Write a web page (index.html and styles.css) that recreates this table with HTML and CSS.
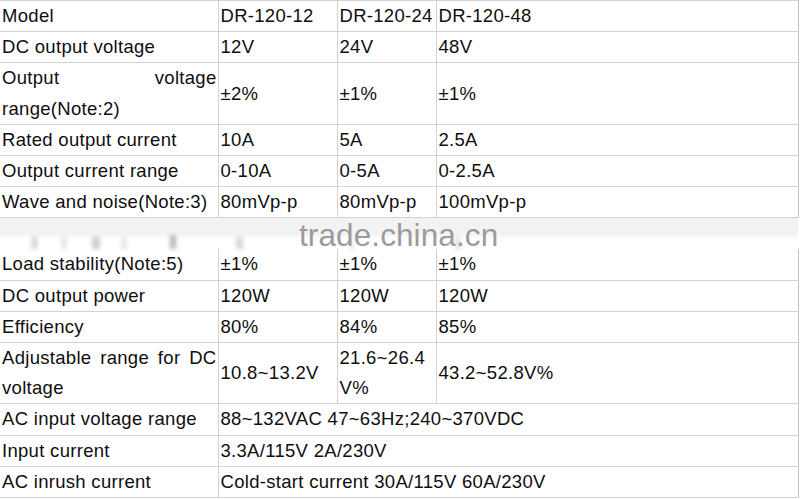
FILE: index.html
```html
<!DOCTYPE html>
<html>
<head>
<meta charset="utf-8">
<link rel="stylesheet" href="styles.css">
</head>
<body>
<table class="spec">
  <colgroup>
    <col class="c1"><col class="c2"><col class="c3"><col class="c4">
  </colgroup>
  <tbody>
    <tr><td class="lbl">Model</td><td>DR-120-12</td><td>DR-120-24</td><td>DR-120-48</td></tr>
    <tr><td class="lbl">DC output voltage</td><td>12V</td><td>24V</td><td>48V</td></tr>
    <tr><td class="lbl">Output voltage range(Note:2)</td><td>±2%</td><td>±1%</td><td>±1%</td></tr>
    <tr><td class="lbl">Rated output current</td><td>10A</td><td>5A</td><td>2.5A</td></tr>
    <tr><td class="lbl">Output current range</td><td>0-10A</td><td>0-5A</td><td>0-2.5A</td></tr>
    <tr><td class="lbl">Wave and noise(Note:3)</td><td>80mVp-p</td><td>80mVp-p</td><td>100mVp-p</td></tr>
    <tr class="blur-row">
      <td colspan="4" class="blur-cell">
        <div class="band">
          <span class="smudge s1"></span>
          <span class="smudge s2"></span>
          <span class="smudge s3"></span>
          <span class="smudge s4"></span>
          <span class="smudge s5"></span>
          <span class="smudge s6"></span>
          <span class="smudge s7"></span>
          <span class="smudge s8"></span>
          <span class="watermark">trade.china.cn</span>
        </div>
      </td>
    </tr>
    <tr class="after-blur"><td class="lbl">Load stability(Note:5)</td><td>±1%</td><td>±1%</td><td>±1%</td></tr>
    <tr><td class="lbl">DC output power</td><td>120W</td><td>120W</td><td>120W</td></tr>
    <tr><td class="lbl">Efficiency</td><td>80%</td><td>84%</td><td>85%</td></tr>
    <tr><td class="lbl">Adjustable range for DC voltage</td><td>10.8~13.2V</td><td>21.6~26.4 V%</td><td>43.2~52.8V%</td></tr>
    <tr><td class="lbl">AC input voltage range</td><td colspan="3">88~132VAC 47~63Hz;240~370VDC</td></tr>
    <tr><td class="lbl">Input current</td><td colspan="3">3.3A/115V 2A/230V</td></tr>
    <tr><td class="lbl">AC inrush current</td><td colspan="3">Cold-start current 30A/115V 60A/230V</td></tr>
  </tbody>
</table>
</body>
</html>
```

FILE: styles.css
```css
html, body {
  margin: 0;
  padding: 0;
  background: #ffffff;
}

.spec {
  border-collapse: collapse;
  table-layout: fixed;
  width: 798px;
  font-family: "Liberation Sans", Arial, sans-serif;
  font-size: 18.5px;
  letter-spacing: 0.3px;
  line-height: 30.2px;
  color: #0e0e0e;
}

.c1 { width: 218px; }
.c2 { width: 119px; }
.c3 { width: 99px; }
.c4 { width: 362px; }

.spec td {
  border: 1px solid #d3d3d3;
  padding: 0 0 0 2px;
  vertical-align: middle;
  white-space: normal;
}

.spec td:first-child {
  border-left: none;
}

.spec td:last-child {
  border-right: 1px solid #c2c2c2;
}

.spec td.lbl {
  text-align: justify;
  padding: 0 1px 0 2px;
}

.blur-cell {
  padding: 0 !important;
  border-left: hidden !important;
  border-right: hidden !important;
  border-bottom: hidden !important;
}

.after-blur td {
  border-top: hidden;
}

.band {
  position: relative;
  height: 31px;
  background: linear-gradient(to bottom, #f2f2f2 0, #f3f3f3 17px, #fbfbfb 19px, #ffffff 22px);
  overflow: visible;
}

.watermark {
  position: absolute;
  left: 299px;
  top: 5px;
  font-family: "Liberation Sans", Arial, sans-serif;
  font-size: 31.5px;
  letter-spacing: 0.1px;
  line-height: 24px;
  color: #9b9b9b;
}

.smudge {
  position: absolute;
  bottom: 0;
  width: 5px;
  height: 12px;
  background: #b9b9b9;
  filter: blur(2px);
  opacity: 0.7;
}

.s1 { left: 32px; }
.s2 { left: 62px; width: 4px; opacity: 0.5; }
.s3 { left: 92px; width: 8px; }
.s4 { left: 122px; width: 4px; opacity: 0.5; }
.s5 { left: 170px; width: 6px; height: 14px; background: #999999; }
.s6 { left: 236px; width: 7px; opacity: 0.6; }
.s7 { left: 350px; width: 4px; opacity: 0.35; }
.s8 { left: 455px; width: 6px; opacity: 0.4; }
```
